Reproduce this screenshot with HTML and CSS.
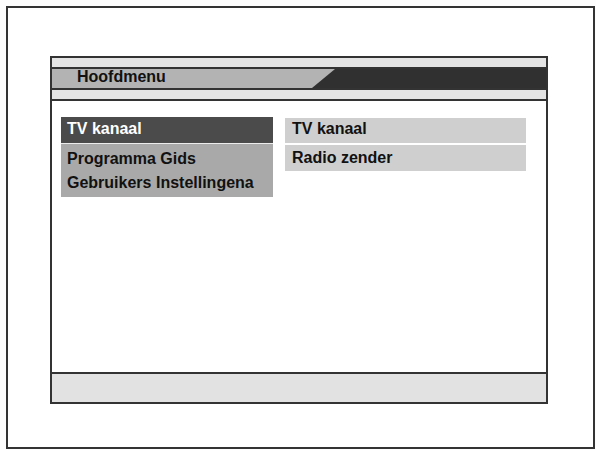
FILE: index.html
```html
<!DOCTYPE html>
<html lang="nl">
<head>
<meta charset="utf-8">
<title>Hoofdmenu</title>
<link rel="stylesheet" href="styles.css">
</head>
<body>
<div class="frame">
  <div class="panel">
    <div class="strip"></div>
    <div class="band"><div class="tab">Hoofdmenu</div></div>
    <div class="strip"></div>
    <div class="content">
      <div class="menu-left">
        <div class="item-sel">TV kanaal</div>
        <div class="items">
          <div class="row">Programma Gids</div>
          <div class="row">Gebruikers Instellingena</div>
        </div>
      </div>
      <div class="menu-right">
        <div class="sub sub-first">TV kanaal</div>
        <div class="sub sub-second">Radio zender</div>
      </div>
    </div>
    <div class="footer"></div>
  </div>
</div>
</body>
</html>
```
FILE: styles.css
```css
html, body {
  margin: 0;
  padding: 0;
  background: #fdfdfd;
  overflow: hidden;
}
body {
  font-family: "Liberation Sans", Arial, sans-serif;
  font-weight: bold;
  font-size: 16px;
  color: #111;
}
.frame {
  box-sizing: border-box;
  margin: 6px 0 0 6px;
  width: 589px;
  height: 443px;
  border: 2px solid #333;
  background: #fff;
  padding: 48px 0 0 42px;
}
.panel {
  box-sizing: border-box;
  width: 498px;
  height: 348px;
  border: 2px solid #333;
  display: flex;
  flex-direction: column;
  background: #fff;
}
.strip {
  height: 9px;
  background: #e4e4e4;
  border-bottom: 2px solid #333;
}
.band {
  height: 19px;
  background: #303030;
  border-bottom: 2px solid #333;
}
.tab {
  width: 283px;
  height: 19px;
  box-sizing: border-box;
  padding-left: 25px;
  line-height: 15px;
  background: #b3b3b3;
  clip-path: polygon(0 0, 283px 0, 260px 100%, 0 100%);
}
.content {
  flex: 1;
  display: flex;
  align-items: flex-start;
  gap: 12px;
  padding: 16px 0 0 9px;
}
.menu-left {
  width: 212px;
  display: flex;
  flex-direction: column;
  gap: 1px;
  background: #ececec;
}
.item-sel {
  height: 26px;
  line-height: 24px;
  padding-left: 6px;
  background: #4b4b4b;
  color: #fff;
  box-sizing: border-box;
}
.items {
  background: #a9a9a9;
  padding: 3px 0 2px 6px;
}
.row {
  line-height: 24px;
}
.menu-right {
  width: 241px;
  margin-top: 1px;
  display: flex;
  flex-direction: column;
  gap: 2px;
}
.sub {
  background: #cfcfcf;
  padding-left: 7px;
}
.sub-first {
  height: 25px;
  line-height: 22px;
}
.sub-second {
  height: 26px;
  line-height: 26px;
}
.footer {
  height: 28px;
  border-top: 2px solid #333;
  background: #e2e2e2;
}
```
